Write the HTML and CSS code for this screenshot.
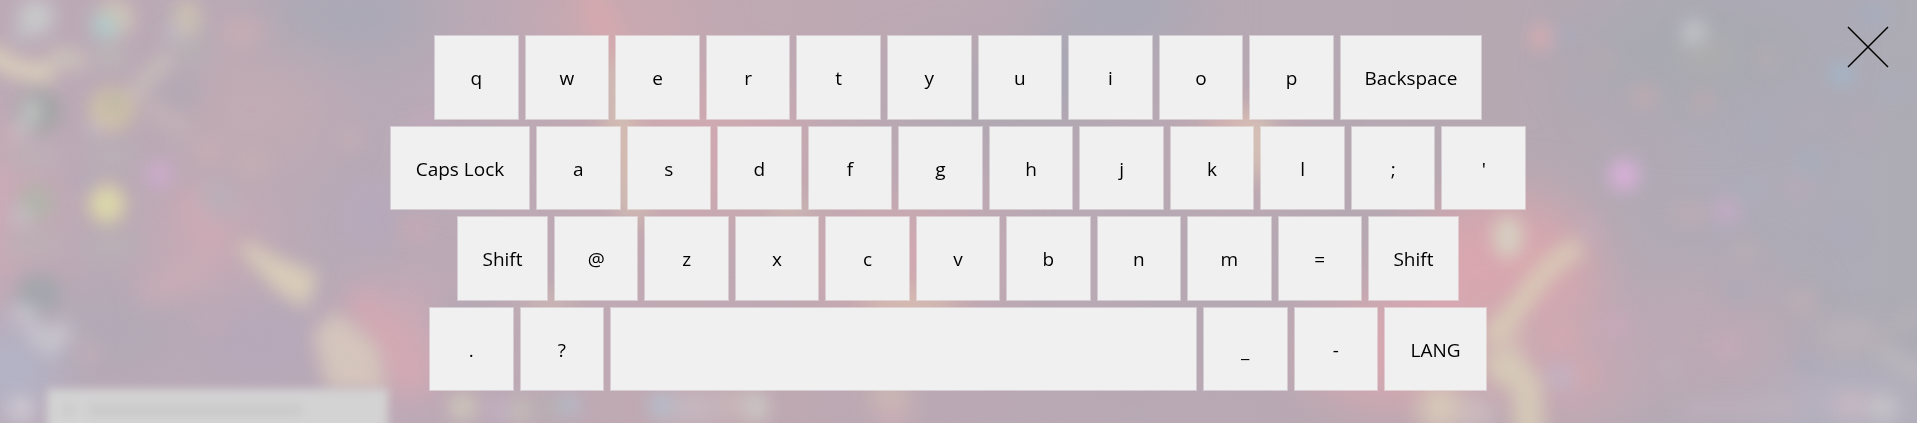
FILE: index.html
```html
<!DOCTYPE html>
<html lang="en">
<head>
<meta charset="utf-8">
<title>On-screen keyboard</title>
<link rel="stylesheet" href="styles.css">
</head>
<body>
<svg class="backdrop" viewBox="0 0 1917 423" preserveAspectRatio="none" aria-hidden="true">
  <defs>
    <linearGradient id="sky" x1="0" y1="0" x2="1" y2="0">
      <stop offset="0" stop-color="#bcaab6"/>
      <stop offset=".2" stop-color="#b8aab7"/>
      <stop offset=".35" stop-color="#c1a9b2"/>
      <stop offset=".6" stop-color="#b7a9b4"/>
      <stop offset=".78" stop-color="#b6a8b1"/>
      <stop offset=".9" stop-color="#afabb7"/>
      <stop offset="1" stop-color="#adacb5"/>
    </linearGradient>
    <filter id="wide" x="-10%" y="-30%" width="120%" height="160%" color-interpolation-filters="sRGB"><feGaussianBlur stdDeviation="28"/></filter>
    <filter id="mid" x="-10%" y="-30%" width="120%" height="160%" color-interpolation-filters="sRGB"><feGaussianBlur stdDeviation="13"/></filter>
    <filter id="soft" x="-10%" y="-30%" width="120%" height="160%" color-interpolation-filters="sRGB"><feGaussianBlur stdDeviation="9"/></filter>
    <filter id="edge" x="-10%" y="-30%" width="120%" height="160%" color-interpolation-filters="sRGB"><feGaussianBlur stdDeviation="5"/></filter>
  </defs>
  <rect width="1917" height="423" fill="url(#sky)"/>
  <g filter="url(#wide)">
    <ellipse cx="350" cy="15" rx="90" ry="40" fill="#a9a9b5"/>
    <ellipse cx="250" cy="110" rx="80" ry="60" fill="#c1abb3"/>
    <ellipse cx="0" cy="210" rx="50" ry="80" fill="#cbabb7"/>
    <ellipse cx="210" cy="240" rx="60" ry="50" fill="#c8abb5"/>
    <ellipse cx="110" cy="330" rx="60" ry="40" fill="#b0a9b6"/>
    <ellipse cx="260" cy="340" rx="60" ry="40" fill="#b6a8ba"/>
    <ellipse cx="10" cy="370" rx="45" ry="45" fill="#b1b6cb"/>
    <ellipse cx="400" cy="345" rx="50" ry="60" fill="#d0aab5"/>
    <ellipse cx="610" cy="20" rx="80" ry="40" fill="#cba9b1"/>
    <ellipse cx="700" cy="150" rx="110" ry="70" fill="#cea9b1"/>
    <ellipse cx="1120" cy="10" rx="80" ry="40" fill="#a8a9b6"/>
    <ellipse cx="1000" cy="100" rx="110" ry="40" fill="#aea8b2"/>
    <ellipse cx="900" cy="260" rx="100" ry="50" fill="#d1a9b1"/>
    <ellipse cx="1240" cy="150" rx="60" ry="50" fill="#c4a9b1"/>
    <ellipse cx="1500" cy="270" rx="100" ry="75" fill="#d9a7af"/>
    <ellipse cx="1400" cy="350" rx="100" ry="60" fill="#d6a8b1"/>
    <ellipse cx="1560" cy="360" rx="110" ry="60" fill="#cba9b3"/>
    <ellipse cx="1700" cy="340" rx="100" ry="70" fill="#bba9b4"/>
    <ellipse cx="1700" cy="50" rx="120" ry="60" fill="#a9a9b2"/>
    <ellipse cx="1850" cy="405" rx="90" ry="30" fill="#b9b3c3"/>
    <ellipse cx="1000" cy="415" rx="180" ry="20" fill="#b8a9b5"/>
    <ellipse cx="1210" cy="415" rx="80" ry="20" fill="#baa9b6"/>
  </g>
  <g filter="url(#mid)">
    <ellipse cx="110" cy="155" rx="28" ry="12" fill="#bab2b6"/>
    <ellipse cx="110" cy="245" rx="30" ry="14" fill="#b8b1b5"/>
    <ellipse cx="33" cy="155" rx="28" ry="12" fill="#bab2b7"/>
    <ellipse cx="33" cy="242" rx="28" ry="16" fill="#bab0b5"/>
    <ellipse cx="182" cy="92" rx="22" ry="16" fill="#b0a9b5"/>
    <ellipse cx="218" cy="198" rx="16" ry="18" fill="#b6b0b9"/>
    <ellipse cx="190" cy="48" rx="20" ry="14" fill="#b5b2b5"/>
    <ellipse cx="245" cy="30" rx="24" ry="12" fill="#c7adb4"/>
    <ellipse cx="370" cy="215" rx="28" ry="35" fill="#b6a9bb"/>
    <path d="M183 190L218 250" stroke="#d0a9b3" stroke-width="18"/>
    <path d="M140 295L205 268" stroke="#cdadb5" stroke-width="18"/>
    <path d="M355 295L420 385" stroke="#d4a9b3" stroke-width="26"/>
    <path d="M590 -10L618 70" stroke="#dba9ac" stroke-width="19"/>
    <path d="M618 60L618 110L635 220" stroke="#d8c8b4" stroke-width="20" fill="none"/>
    <ellipse cx="1055" cy="70" rx="16" ry="34" fill="#a5a7b7"/>
    <ellipse cx="1235" cy="122" rx="30" ry="12" fill="#dcb9b2"/>
    <path d="M1257 115V175" stroke="#dccbb8" stroke-width="22"/>
    <ellipse cx="910" cy="303" rx="50" ry="10" fill="#dcc6b2"/>
    <ellipse cx="790" cy="211" rx="24" ry="10" fill="#d3bfb3"/>
    <ellipse cx="550" cy="303" rx="26" ry="10" fill="#d4bcb4"/>
    <ellipse cx="460" cy="315" rx="26" ry="10" fill="#aaa9b5"/>
    <ellipse cx="890" cy="394" rx="20" ry="9" fill="#d8c4b4"/>
    <ellipse cx="893" cy="418" rx="16" ry="12" fill="#d0aeb7"/>
    <ellipse cx="690" cy="408" rx="30" ry="14" fill="#c7bcc4"/>
    <ellipse cx="740" cy="404" rx="18" ry="12" fill="#cfc0be"/>
    <ellipse cx="1440" cy="408" rx="20" ry="26" fill="#d9cbb9"/>
    <ellipse cx="1478" cy="415" rx="14" ry="20" fill="#cfbfc4"/>
    <ellipse cx="1505" cy="345" rx="16" ry="26" fill="#d4bdb6"/>
    <ellipse cx="1850" cy="335" rx="38" ry="14" fill="#bcb2b8"/>
    <ellipse cx="1705" cy="55" rx="28" ry="14" fill="#afafae"/>
  </g>
  <g filter="url(#soft)">
    <g opacity=".95">
      <path d="M-15 48Q12 76 54 72" stroke="#dcd1bb" stroke-width="19" fill="none"/>
      <path d="M50 56L85 62" stroke="#cec5bb" stroke-width="18"/>
      <path d="M132 98Q148 75 172 55" stroke="#c9bebb" stroke-width="15" fill="none"/>
      <ellipse cx="36" cy="17" rx="18" ry="18" fill="#c9cbcc"/>
      <ellipse cx="22" cy="34" rx="9" ry="9" fill="#c1c0c5"/>
      <ellipse cx="115" cy="18" rx="19" ry="19" fill="#d1c5b6"/>
      <ellipse cx="105" cy="26" rx="14" ry="13" fill="#b0cdcb"/>
      <ellipse cx="187" cy="18" rx="14" ry="20" fill="#ccc1b2"/>
      <ellipse cx="174" cy="32" rx="9" ry="9" fill="#c1bdc9"/>
      <ellipse cx="110" cy="57" rx="17" ry="12" fill="#bcb6b6"/>
      <ellipse cx="38" cy="111" rx="22" ry="21" fill="#9ea2a1"/>
      <ellipse cx="32" cy="111" rx="10" ry="12" fill="#c6cac8"/>
      <ellipse cx="22" cy="129" rx="9" ry="7" fill="#c9c9cf"/>
      <ellipse cx="112" cy="109" rx="22" ry="21" fill="#d3c4a7"/>
      <ellipse cx="114" cy="105" rx="8" ry="9" fill="#b0b3a2"/>
      <ellipse cx="96" cy="127" rx="8" ry="6" fill="#cbc4cc"/>
      <ellipse cx="36" cy="203" rx="19" ry="19" fill="#b2b4aa"/>
      <ellipse cx="22" cy="215" rx="9" ry="9" fill="#c4c4c9"/>
      <ellipse cx="107" cy="204" rx="18" ry="19" fill="#dfdba9"/>
      <ellipse cx="39" cy="294" rx="23" ry="21" fill="#a3a6ac"/>
      <ellipse cx="24" cy="314" rx="13" ry="9" fill="#c9c8d0"/>
      <path d="M30 328L50 345L68 326" stroke="#c9c6ce" stroke-width="20" fill="none"/>
      <ellipse cx="21" cy="409" rx="13" ry="13" fill="#d0ccd4"/>
      <ellipse cx="159" cy="174" rx="13" ry="13" fill="#cfaccf"/>
      <path d="M242 245L272 260L312 276L304 302L280 288Z" fill="#dbcfb9" stroke="#dbcfb9" stroke-width="9"/>
      <path d="M318 335L335 318L352 330L374 350L380 386L332 386Z" fill="#d5c7bd" stroke="#d5c7bd" stroke-width="10"/>
      <path d="M1580 246Q1550 262 1532 288T1490 340" stroke="#d8ccb7" stroke-width="20" fill="none"/>
      <path d="M1490 374L1508 364L1526 384L1530 440" stroke="#d6cbb8" stroke-width="30" fill="none" stroke-linejoin="round"/>
      <ellipse cx="1508" cy="237" rx="15" ry="22" fill="#d6d2c2"/>
      <ellipse cx="1624" cy="175" rx="15" ry="16" fill="#dcb0dc"/>
      <ellipse cx="1541" cy="37" rx="12" ry="12" fill="#d8acb1"/>
      <ellipse cx="1694" cy="32" rx="12" ry="13" fill="#c4c6ca"/>
      <ellipse cx="1842" cy="74" rx="12" ry="11" fill="#a2b7cb"/>
      <ellipse cx="463" cy="407" rx="14" ry="14" fill="#cfc8bb"/>
      <ellipse cx="498" cy="410" rx="10" ry="12" fill="#c3b1c8"/>
      <ellipse cx="520" cy="411" rx="10" ry="14" fill="#c3bfb8"/>
      <ellipse cx="549" cy="408" rx="12" ry="12" fill="#b7b0b4"/>
      <ellipse cx="570" cy="405" rx="10" ry="14" fill="#b4bbc8"/>
      <ellipse cx="661" cy="405" rx="13" ry="14" fill="#b4bdcb"/>
      <ellipse cx="757" cy="407" rx="12" ry="14" fill="#cbc9c7"/>
    </g>
    <g opacity=".6">
      <path d="M145 105L190 132" stroke="#c6b8b8" stroke-width="17"/>
      <ellipse cx="208" cy="152" rx="13" ry="11" fill="#cfb1b4"/>
      <ellipse cx="252" cy="164" rx="17" ry="12" fill="#c9b1b5"/>
      <ellipse cx="83" cy="181" rx="8" ry="9" fill="#b0a9bd"/>
      <ellipse cx="10" cy="136" rx="10" ry="8" fill="#d0adb1"/>
      <ellipse cx="240" cy="35" rx="14" ry="9" fill="#cbb0b3"/>
      <ellipse cx="350" cy="139" rx="14" ry="12" fill="#c6b0b5"/>
      <ellipse cx="416" cy="229" rx="18" ry="14" fill="#cbabb5"/>
      <ellipse cx="424" cy="121" rx="14" ry="8" fill="#c8a9c2"/>
      <ellipse cx="88" cy="352" rx="12" ry="12" fill="#c9b0b7"/>
      <ellipse cx="213" cy="322" rx="12" ry="10" fill="#c4abb7"/>
      <ellipse cx="1565" cy="35" rx="12" ry="15" fill="#a7abbb"/>
      <ellipse cx="1644" cy="97" rx="14" ry="12" fill="#c8acae"/>
      <ellipse cx="1704" cy="101" rx="12" ry="11" fill="#c4abac"/>
      <ellipse cx="1766" cy="57" rx="10" ry="10" fill="#bfadb0"/>
      <ellipse cx="1603" cy="60" rx="13" ry="12" fill="#b9abb1"/>
      <ellipse cx="1580" cy="92" rx="13" ry="12" fill="#abacb9"/>
      <ellipse cx="1873" cy="14" rx="17" ry="15" fill="#a5aec0"/>
      <ellipse cx="1895" cy="88" rx="17" ry="12" fill="#a8aebc"/>
      <ellipse cx="1810" cy="163" rx="13" ry="12" fill="#a4afc1"/>
      <ellipse cx="1750" cy="188" rx="13" ry="12" fill="#abb0bd"/>
      <ellipse cx="1760" cy="131" rx="14" ry="11" fill="#a8aebc"/>
      <ellipse cx="1727" cy="211" rx="13" ry="12" fill="#d4acd0"/>
      <ellipse cx="1798" cy="188" rx="13" ry="10" fill="#bfaaba"/>
      <ellipse cx="1690" cy="214" rx="19" ry="10" fill="#c6aeb2"/>
      <ellipse cx="1862" cy="124" rx="14" ry="13" fill="#b5a8b8"/>
      <ellipse cx="1745" cy="252" rx="13" ry="12" fill="#beafb2"/>
      <ellipse cx="1843" cy="232" rx="15" ry="12" fill="#acaabf"/>
      <ellipse cx="1590" cy="230" rx="9" ry="13" fill="#c6b0bf"/>
      <ellipse cx="1803" cy="303" rx="14" ry="12" fill="#c6b1b3"/>
      <ellipse cx="1738" cy="292" rx="14" ry="13" fill="#a9aaba"/>
      <ellipse cx="1728" cy="346" rx="13" ry="12" fill="#cdabbc"/>
      <ellipse cx="1617" cy="325" rx="14" ry="12" fill="#cea9be"/>
      <ellipse cx="1562" cy="337" rx="15" ry="12" fill="#d8abb0"/>
      <ellipse cx="1561" cy="377" rx="15" ry="13" fill="#c0b8cc"/>
      <ellipse cx="1584" cy="374" rx="10" ry="12" fill="#d6a9af"/>
      <ellipse cx="1670" cy="367" rx="13" ry="13" fill="#bcb1be"/>
      <ellipse cx="1806" cy="362" rx="13" ry="11" fill="#a9a9ba"/>
      <ellipse cx="1850" cy="405" rx="18" ry="14" fill="#cfbbc4"/>
      <ellipse cx="1883" cy="408" rx="15" ry="13" fill="#d2d0cf"/>
      <path d="M1880 350L1927 378" stroke="#c8c0c1" stroke-width="14"/>
      <path d="M1895 330L1917 310" stroke="#c1b6b8" stroke-width="14"/>
      <path d="M1680 409H1800" stroke="#c1b3bf" stroke-width="18"/>
    </g>
  </g>
  <g filter="url(#edge)">
    <rect x="47" y="389" width="341" height="60" fill="#d3d3d3"/>
    <path d="M64 410H74M88 410H302" stroke="#cacaca" stroke-width="12"/>
  </g>
</svg>

<main class="overlay">
  <div class="keyboard">
    <div class="row row-top">
      <button class="key">q</button><button class="key">w</button><button class="key">e</button><button class="key">r</button><button class="key">t</button><button class="key">y</button><button class="key">u</button><button class="key">i</button><button class="key">o</button><button class="key">p</button><button class="key backspace">Backspace</button>
    </div>
    <div class="row row-home">
      <button class="key caps">Caps Lock</button><button class="key">a</button><button class="key">s</button><button class="key">d</button><button class="key">f</button><button class="key">g</button><button class="key">h</button><button class="key">j</button><button class="key">k</button><button class="key">l</button><button class="key">;</button><button class="key">'</button>
    </div>
    <div class="row row-lower">
      <button class="key shift">Shift</button><button class="key">@</button><button class="key">z</button><button class="key">x</button><button class="key">c</button><button class="key">v</button><button class="key">b</button><button class="key">n</button><button class="key">m</button><button class="key">=</button><button class="key shift">Shift</button>
    </div>
    <div class="row row-space">
      <button class="key">.</button><button class="key">?</button><button class="key space" aria-label="Space"></button><button class="key">_</button><button class="key">-</button><button class="key lang">LANG</button>
    </div>
  </div>
  <button class="close" aria-label="Close">
    <svg width="42" height="42" viewBox="0 0 42 42" aria-hidden="true"><path d="M1 1L41 41M41 1L1 41" stroke="#000" stroke-width="1.5"/></svg>
  </button>
</main>
</body>
</html>
```
FILE: styles.css
```css
* {
  box-sizing: border-box;
}

body {
  margin: 0;
  min-height: 100vh;
  background: #b8aab5;
  color: #000;
  font-family: "Segoe UI", "Open Sans", "Noto Sans", sans-serif;
  font-size: 19px;
  overflow: hidden;
}

.backdrop {
  position: fixed;
  inset: 0;
  width: 100%;
  height: 100%;
}

.overlay {
  position: relative;
  padding: 35px 24px 32px 23px;
}

.keyboard {
  display: grid;
  grid-auto-rows: 1fr;
  justify-items: center;
  gap: 6px;
  min-height: 356px;
}

.row {
  display: flex;
  gap: 6px;
  width: 100%;
}

.row-top {
  max-width: 1048px;
}

.row-home {
  max-width: 1136px;
}

.row-lower {
  max-width: 1002px;
}

.row-space {
  max-width: 1058px;
}

.key {
  flex: 1 1 0;
  min-width: 0;
  padding: 2px 0 0;
  border: 1px solid rgba(240, 240, 240, 0.5);
  background: #f0f0f0;
  background-clip: padding-box;
  color: inherit;
  font: inherit;
  white-space: nowrap;
}

.backspace {
  flex: 0 0 142px;
}

.caps {
  flex: 0 0 140px;
}

.shift {
  flex: 0 0 91px;
}

.space {
  flex: 0 0 587px;
}

.lang {
  flex: 0 0 103px;
}

.close {
  position: absolute;
  top: 26px;
  right: 28px;
  padding: 0;
  border: 0;
  background: none;
  line-height: 0;
}
```
